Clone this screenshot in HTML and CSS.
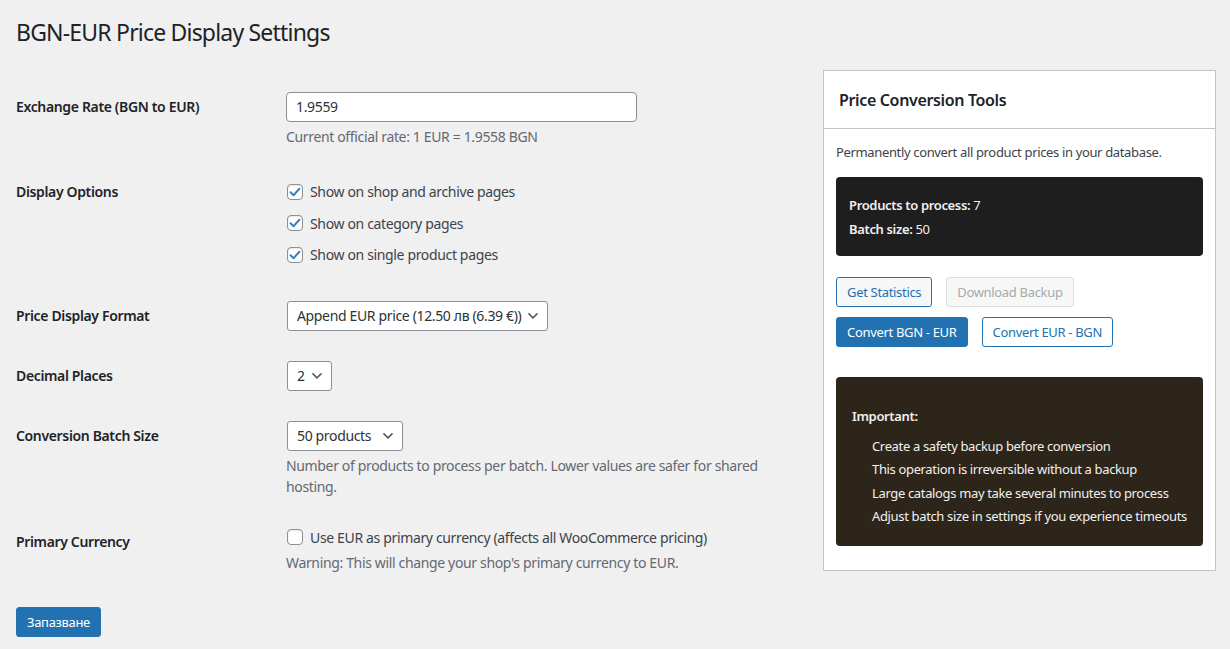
FILE: index.html
```html
<!DOCTYPE html>
<html lang="en">
<head>
<meta charset="utf-8">
<title>BGN-EUR Price Display Settings</title>
<link rel="stylesheet" href="styles.css">
</head>
<body>
<div class="wrap">
  <h1 class="page-title">BGN-EUR Price Display Settings</h1>
  <div class="columns">
    <form class="settings">
      <div class="form-table">
        <div class="row">
          <div class="th">Exchange Rate (BGN to EUR)</div>
          <div class="td">
            <div class="text-input">1.9559</div>
            <p class="description">Current official rate: 1 EUR = 1.9558 BGN</p>
          </div>
        </div>
        <div class="row">
          <div class="th">Display Options</div>
          <div class="td td-checks">
            <label class="check-row"><span class="checkbox is-checked"><svg viewBox="0 0 16 16" width="16" height="16"><path d="M3.6 8.3l2.9 2.9 5.9-6.4" fill="none" stroke="#3582c4" stroke-width="2" stroke-linecap="round" stroke-linejoin="round"/></svg></span>Show on shop and archive pages</label>
            <label class="check-row"><span class="checkbox is-checked"><svg viewBox="0 0 16 16" width="16" height="16"><path d="M3.6 8.3l2.9 2.9 5.9-6.4" fill="none" stroke="#3582c4" stroke-width="2" stroke-linecap="round" stroke-linejoin="round"/></svg></span>Show on category pages</label>
            <label class="check-row"><span class="checkbox is-checked"><svg viewBox="0 0 16 16" width="16" height="16"><path d="M3.6 8.3l2.9 2.9 5.9-6.4" fill="none" stroke="#3582c4" stroke-width="2" stroke-linecap="round" stroke-linejoin="round"/></svg></span>Show on single product pages</label>
          </div>
        </div>
        <div class="row">
          <div class="th">Price Display Format</div>
          <div class="td">
            <div class="select"><span>Append EUR price (12.50 лв (6.39 €))</span><svg class="chev" viewBox="0 0 20 20" width="20" height="20"><path d="M5 6l5 5 5-5 2 1-7 7-7-7 2-1z" fill="#555"/></svg></div>
          </div>
        </div>
        <div class="row">
          <div class="th">Decimal Places</div>
          <div class="td">
            <div class="select"><span>2</span><svg class="chev" viewBox="0 0 20 20" width="20" height="20"><path d="M5 6l5 5 5-5 2 1-7 7-7-7 2-1z" fill="#555"/></svg></div>
          </div>
        </div>
        <div class="row">
          <div class="th">Conversion Batch Size</div>
          <div class="td">
            <div class="select select-batch"><span>50 products</span><svg class="chev" viewBox="0 0 20 20" width="20" height="20"><path d="M5 6l5 5 5-5 2 1-7 7-7-7 2-1z" fill="#555"/></svg></div>
            <p class="description description-wrap">Number of products to process per batch. Lower values are safer for shared hosting.</p>
          </div>
        </div>
        <div class="row">
          <div class="th">Primary Currency</div>
          <div class="td">
            <label class="check-line"><span class="checkbox"></span>Use EUR as primary currency (affects all WooCommerce pricing)</label>
            <p class="description">Warning: This will change your shop's primary currency to EUR.</p>
          </div>
        </div>
      </div>
      <p class="submit"><button type="button" class="button button-primary">Запазване</button></p>
    </form>

    <aside class="card">
      <h2 class="card-title">Price Conversion Tools</h2>
      <div class="card-body">
        <p class="intro">Permanently convert all product prices in your database.</p>
        <div class="stats">
          <p><strong>Products to process:</strong> 7</p>
          <p><strong>Batch size:</strong> 50</p>
        </div>
        <div class="btn-row">
          <button type="button" class="button">Get Statistics</button>
          <button type="button" class="button" disabled>Download Backup</button>
        </div>
        <div class="btn-row btn-row-2">
          <button type="button" class="button button-primary">Convert BGN - EUR</button>
          <button type="button" class="button button-white">Convert EUR - BGN</button>
        </div>
        <div class="notice">
          <p class="notice-title">Important:</p>
          <ul>
            <li>Create a safety backup before conversion</li>
            <li>This operation is irreversible without a backup</li>
            <li>Large catalogs may take several minutes to process</li>
            <li>Adjust batch size in settings if you experience timeouts</li>
          </ul>
        </div>
      </div>
    </aside>
  </div>
</div>
</body>
</html>
```

FILE: styles.css
```css
* { box-sizing: border-box; }

html, body {
  margin: 0;
  padding: 0;
}

body {
  background: #f0f0f1;
  color: #3c434a;
  font-family: "Noto Sans", "Open Sans", Arial, sans-serif;
  font-size: 14px;
  line-height: 1.4;
  letter-spacing: -0.025em;
}

.wrap {
  padding: 0 14px 0 16px;
}

.page-title {
  margin: 0;
  padding-top: 17px;
  font-size: 23px;
  font-weight: 400;
  line-height: 30px;
  letter-spacing: -0.035em;
  color: #1d2327;
}

.columns {
  display: flex;
  align-items: flex-start;
  gap: 17px;
  margin-top: 23px;
}

.settings {
  width: 790px;
  flex: none;
  padding-top: 7px;
}

.row {
  display: grid;
  grid-template-columns: 270px 1fr;
}

.th {
  padding: 21px 10px 19px 0;
  font-weight: 600;
  line-height: 18px;
  color: #1d2327;
}

.td {
  padding: 15px 10px 15px 0;
  line-height: 21px;
}

.td-checks {
  padding-top: 14px;
}

.text-input {
  width: 351px;
  height: 30px;
  border: 1px solid #8c8f94;
  border-radius: 4px;
  background: #fff;
  padding: 0 9px;
  line-height: 28px;
  color: #2c3338;
}

.description {
  margin: 4px 0 0;
  color: #646970;
  line-height: 21px;
}

.description-wrap {
  max-width: 490px;
}

.check-row,
.check-line {
  display: flex;
  align-items: center;
  gap: 7px;
  color: #3c434a;
  margin-left: 1px;
}

.check-row {
  height: 31.5px;
}

.check-line {
  height: 21px;
}

.checkbox {
  width: 16px;
  height: 16px;
  flex: none;
  border: 1px solid #8c8f94;
  border-radius: 4px;
  background: #fff;
  position: relative;
  box-shadow: inset 0 1px 2px rgba(0,0,0,.1);
}

.checkbox svg {
  position: absolute;
  left: -1px;
  top: -1px;
}

.select {
  display: inline-flex;
  align-items: center;
  position: relative;
  height: 30px;
  border: 1px solid #8c8f94;
  border-radius: 3px;
  background: #fff;
  padding: 0 26px 0 9px;
  color: #2c3338;
  margin-left: 1px;
}

.select .chev {
  position: absolute;
  right: 4px;
  top: 4px;
  width: 20px;
  height: 20px;
  transform: scale(0.75);
}

.select-batch {
  min-width: 116px;
}

.submit {
  margin: 19px 0 0;
}

.button {
  display: inline-flex;
  align-items: center;
  height: 30px;
  padding: 0 10px;
  border: 1px solid #2271b1;
  border-radius: 3px;
  background: #f6f7f7;
  color: #2271b1;
  font-family: inherit;
  font-size: 13px;
  letter-spacing: -0.025em;
  line-height: 28px;
  white-space: nowrap;
  cursor: pointer;
}

.button[disabled] {
  color: #a7aaad;
  border-color: #dcdcde;
  background: #f6f7f7;
  cursor: default;
}

.button-primary {
  background: #2271b1;
  border-color: #2271b1;
  color: #fff;
}

.button-white {
  background: #fff;
}

.card {
  width: 393px;
  flex: none;
  background: #fff;
  border: 1px solid #c3c4c7;
}

.card-title {
  margin: 0;
  height: 58px;
  padding: 0 15px;
  border-bottom: 1px solid #c3c4c7;
  font-size: 16px;
  font-weight: 600;
  line-height: 58px;
  color: #1d2327;
}

.card-body {
  padding: 13px 12px 24px;
  font-size: 13px;
}

.intro {
  margin: 0 0 15px;
  line-height: 20px;
  color: #3c434a;
}

.stats {
  background: #1e1e1e;
  border-radius: 4px;
  padding: 16px 13px 15px;
  color: #f0f0f0;
}

.stats p {
  margin: 0;
  line-height: 24px;
}

.stats strong {
  font-weight: 600;
}

.btn-row {
  display: flex;
  gap: 14px;
  margin-top: 21px;
}

.btn-row-2 {
  margin-top: 10px;
}

.notice {
  margin-top: 30px;
  background: #2e251a;
  border-radius: 4px;
  padding: 28px 16px 17px;
  color: #f0f0f0;
}

.notice-title {
  margin: 0;
  font-weight: 600;
  line-height: 22px;
}

.notice ul {
  list-style: none;
  margin: 8px 0 0;
  padding: 0 0 0 20px;
}

.notice li {
  line-height: 23.4px;
  white-space: nowrap;
}
```
